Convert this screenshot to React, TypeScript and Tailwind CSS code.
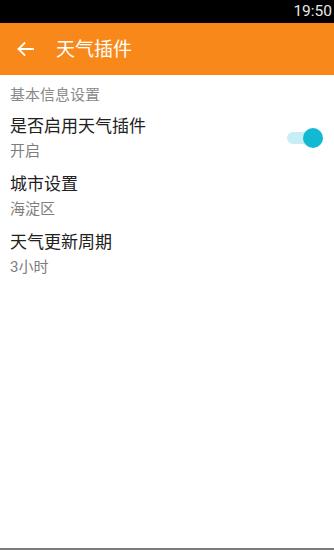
import React from "react";

const font = { fontFamily: "Roboto, 'Noto Sans CJK SC', sans-serif" };

function Item({ title, sub, right }: { title: string; sub: string; right?: React.ReactNode }) {
  return (
    <div className="flex items-center py-[6px] pl-[10px] pr-[11px]">
      <div className="flex flex-1 flex-col">
        <div className="text-[17px] leading-[22px] text-[#212121]">{title}</div>
        <div className="mt-[4px] text-[15px] leading-[20px] text-[#7d7d7d]">{sub}</div>
      </div>
      {right}
    </div>
  );
}

function Switch() {
  return (
    <div className="relative h-[20px] w-[36px]">
      <div className="absolute left-0 top-[4px] h-[12px] w-[31px] rounded-full bg-[#c8eef5]" />
      <div className="absolute right-0 top-0 h-[20px] w-[20px] rounded-full bg-[#13b8d3]" />
    </div>
  );
}

export default function App() {
  return (
    <div className="flex h-[550px] w-[334px] flex-col bg-white" style={font}>
      <div className="flex h-[23px] items-center justify-end bg-black pr-[2px]">
        <span className="text-[15.5px] leading-none text-[#e8e8e8]" style={{ fontFamily: "Roboto, sans-serif" }}>
          19:50
        </span>
      </div>
      <div className="flex h-[52px] items-center bg-[#f9881b]">
        <svg className="ml-[17px] h-[14px] w-[17px]" viewBox="0 0 17 14" fill="none">
          <path d="M1.5 7H16.5M7.5 1L1.5 7L7.5 13" stroke="white" strokeWidth="1.8" strokeLinecap="square" />
        </svg>
        <span className="ml-[22px] text-[19px] leading-none text-white">天气插件</span>
      </div>
      <div className="flex flex-1 flex-col">
        <div className="pl-[10px] pt-[10px] pb-[4px] text-[15px] leading-[20px] text-[#8a8a8a]">基本信息设置</div>
        <Item title="是否启用天气插件" sub="开启" right={<Switch />} />
        <Item title="城市设置" sub="海淀区" />
        <Item title="天气更新周期" sub="3小时" />
      </div>
      <div className="h-[2px] bg-[#7b7b7b]" />
    </div>
  );
}
